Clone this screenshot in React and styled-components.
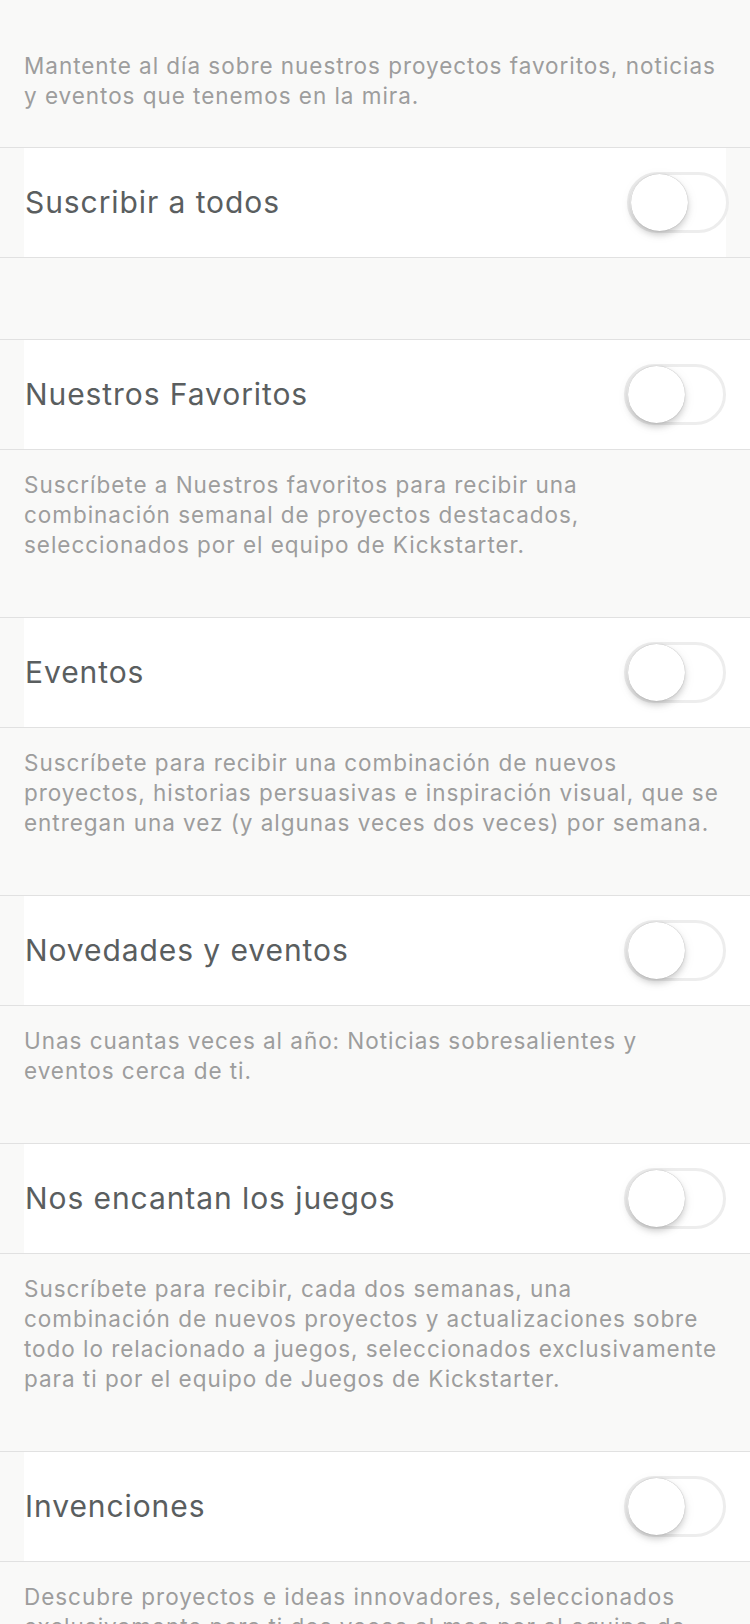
import React from "react";
import styled, { createGlobalStyle } from "styled-components";

const Global = createGlobalStyle`
  html, body {
    margin: 0;
    padding: 0;
    background: #f9f9f8;
  }
  body {
    font-family: Inter, "Noto Sans", "Liberation Sans", sans-serif;
    -webkit-font-smoothing: antialiased;
  }
`;

const Page = styled.div`
  width: 750px;
  background: #f9f9f8;
  display: flex;
  flex-direction: column;
`;

const Note = styled.div`
  padding: ${(p) => (p.$header ? "51px 24px 36px" : "20px 24px 57px")};
  display: flex;
  flex-direction: column;
`;

const NoteLine = styled.span`
  display: block;
  font-size: 22.5px;
  line-height: 30px;
  color: #9d9d9d;
  white-space: nowrap;
  letter-spacing: 0.96px;
`;

const Group = styled.div`
  border-top: 1px solid #e1e1e1;
  border-bottom: 1px solid #e1e1e1;
  background: #f9f9f8;
  display: flex;
`;

const Cell = styled.div`
  flex: 1;
  height: 109px;
  margin-left: 24px;
  margin-right: ${(p) => (p.$inset ? "24px" : "0")};
  padding-left: 1px;
  padding-right: ${(p) => (p.$inset ? "0" : "24px")};
  background: #ffffff;
  display: flex;
  align-items: center;
  justify-content: space-between;
`;

const Title = styled.span`
  font-size: 30px;
  line-height: 36px;
  margin-top: -2px;
  color: #5a5e5f;
  letter-spacing: 0.92px;
`;

const Spacer = styled.div`
  height: ${(p) => p.$h}px;
`;

const Track = styled.div`
  position: relative;
  width: 102px;
  height: 61px;
  box-sizing: border-box;
  border: 3px solid #ededed;
  border-radius: 31px;
  background: #ffffff;
  margin-right: ${(p) => (p.$inset ? "-3px" : "0")};
  flex-shrink: 0;
`;

const Knob = styled.div`
  position: absolute;
  top: -1px;
  left: 1px;
  width: 57px;
  height: 57px;
  border-radius: 50%;
  background: #ffffff;
  box-shadow: 0 0 1px rgba(0, 0, 0, 0.35), 0 4px 6px rgba(0, 0, 0, 0.16),
    0 3px 14px rgba(0, 0, 0, 0.06);
`;

function Toggle({ inset }) {
  return (
    <Track $inset={inset}>
      <Knob />
    </Track>
  );
}

function Row({ title, inset }) {
  return (
    <Group>
      <Cell $inset={inset}>
        <Title>{title}</Title>
        <Toggle inset={inset} />
      </Cell>
    </Group>
  );
}

function Description({ lines, header }) {
  return (
    <Note $header={header}>
      {lines.map((l, i) => (
        <NoteLine key={i}>{l}</NoteLine>
      ))}
    </Note>
  );
}

const sections = [
  {
    title: "Nuestros Favoritos",
    lines: [
      "Suscríbete a Nuestros favoritos para recibir una",
      "combinación semanal de proyectos destacados,",
      "seleccionados por el equipo de Kickstarter.",
    ],
  },
  {
    title: "Eventos",
    lines: [
      "Suscríbete para recibir una combinación de nuevos",
      "proyectos, historias persuasivas e inspiración visual, que se",
      "entregan una vez (y algunas veces dos veces) por semana.",
    ],
  },
  {
    title: "Novedades y eventos",
    lines: [
      "Unas cuantas veces al año: Noticias sobresalientes y",
      "eventos cerca de ti.",
    ],
  },
  {
    title: "Nos encantan los juegos",
    lines: [
      "Suscríbete para recibir, cada dos semanas, una",
      "combinación de nuevos proyectos y actualizaciones sobre",
      "todo lo relacionado a juegos, seleccionados exclusivamente",
      "para ti por el equipo de Juegos de Kickstarter.",
    ],
  },
  {
    title: "Invenciones",
    lines: [
      "Descubre proyectos e ideas innovadores, seleccionados",
      "exclusivamente para ti dos veces al mes por el equipo de",
      "Kickstarter.",
    ],
  },
];

export default function App() {
  return (
    <Page>
      <Global />
      <Description
        header
        lines={[
          "Mantente al día sobre nuestros proyectos favoritos, noticias",
          "y eventos que tenemos en la mira.",
        ]}
      />
      <Row title="Suscribir a todos" inset />
      <Spacer $h={81} />
      {sections.map((s) => (
        <React.Fragment key={s.title}>
          <Row title={s.title} />
          <Description lines={s.lines} />
        </React.Fragment>
      ))}
    </Page>
  );
}
